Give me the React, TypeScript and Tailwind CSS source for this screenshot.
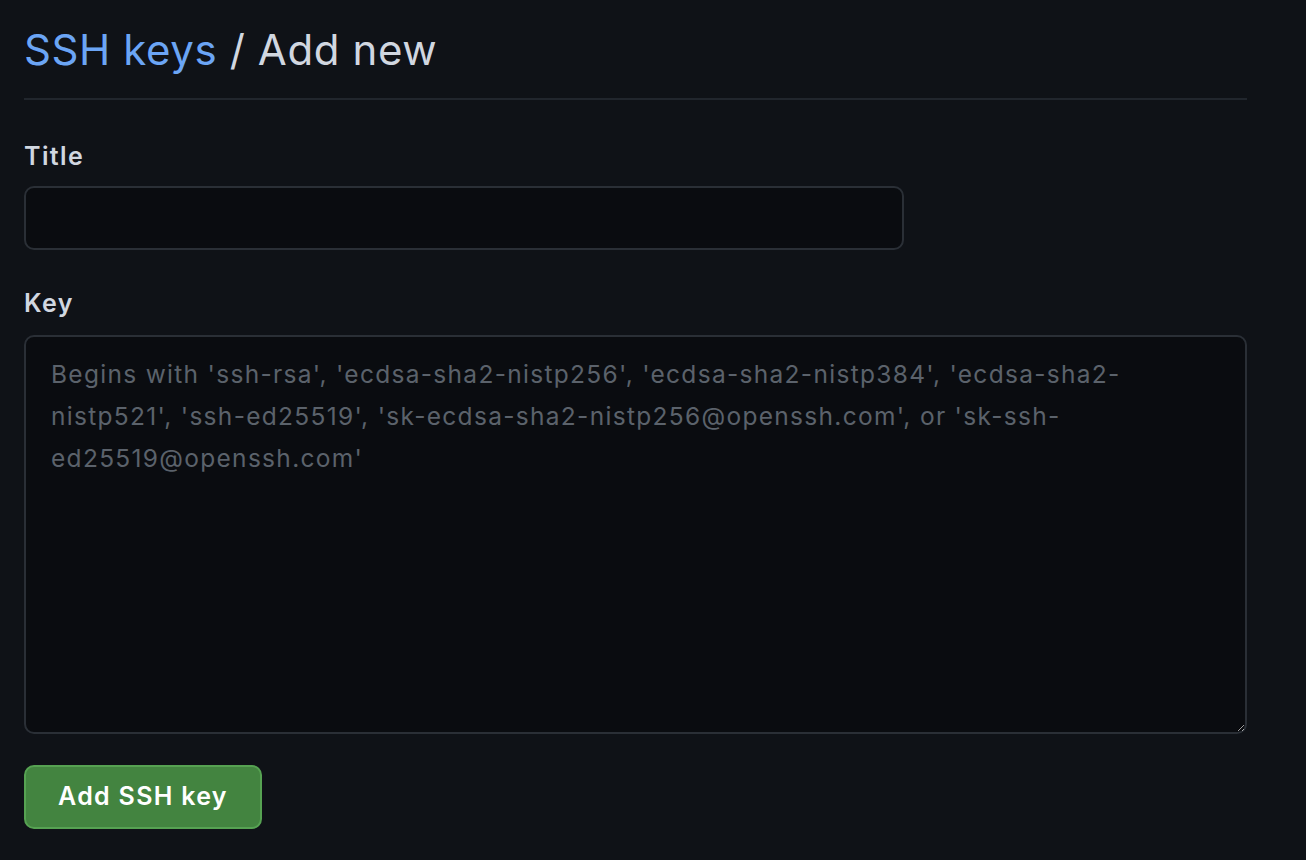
export default function App() {
  return (
    <div
      className="min-h-[860px] w-full bg-[#0f1217] text-[#d1d7e0]"
      style={{ fontFamily: 'Inter, "Noto Sans", sans-serif' }}
    >
      <div className="w-[1223px] pl-6 box-content">
        <div className="pt-[22px] pb-[20px] border-b-2 border-[#21262d]">
          <h1 className="text-[42px] leading-[56px] font-normal tracking-[0.6px]">
            <a href="#" className="text-[#6ba5f5]">
              SSH keys
            </a>{" "}
            / Add new
          </h1>
        </div>

        <form className="flex flex-col">
          <label className="mt-[40px] text-[25px] leading-[32px] font-semibold tracking-[1.4px] text-[#d1d7e0]">
            Title
          </label>
          <input
            type="text"
            className="mt-[14px] w-[880px] h-[64px] rounded-[10px] border-2 border-[#2a2f36] bg-[#0a0c10] px-6 text-[24px] outline-none"
          />

          <label className="mt-[37px] text-[25px] leading-[32px] font-semibold tracking-[1.4px] text-[#d1d7e0]">
            Key
          </label>
          <textarea
            placeholder="Begins with 'ssh-rsa', 'ecdsa-sha2-nistp256', 'ecdsa-sha2-nistp384', 'ecdsa-sha2-nistp521', 'ssh-ed25519', 'sk-ecdsa-sha2-nistp256@openssh.com', or 'sk-ssh-ed25519@openssh.com'"
            className="mt-[16px] w-[1223px] h-[399px] rounded-[10px] border-2 border-[#2a2f36] bg-[#0a0c10] px-[25px] pt-[16px] pb-[18px] text-[24.5px] leading-[42px] tracking-[1.3px] text-[#d1d7e0] placeholder:text-[#5b626b] outline-none resize-y"
          />

          <div className="mt-[31px]">
            <button
              type="button"
              className="h-[64px] w-[238px] rounded-[10px] border-2 border-[#56a252] bg-[#438440] text-[25px] font-semibold tracking-[1.3px] text-white"
            >
              Add SSH key
            </button>
          </div>
        </form>
      </div>
    </div>
  );
}
